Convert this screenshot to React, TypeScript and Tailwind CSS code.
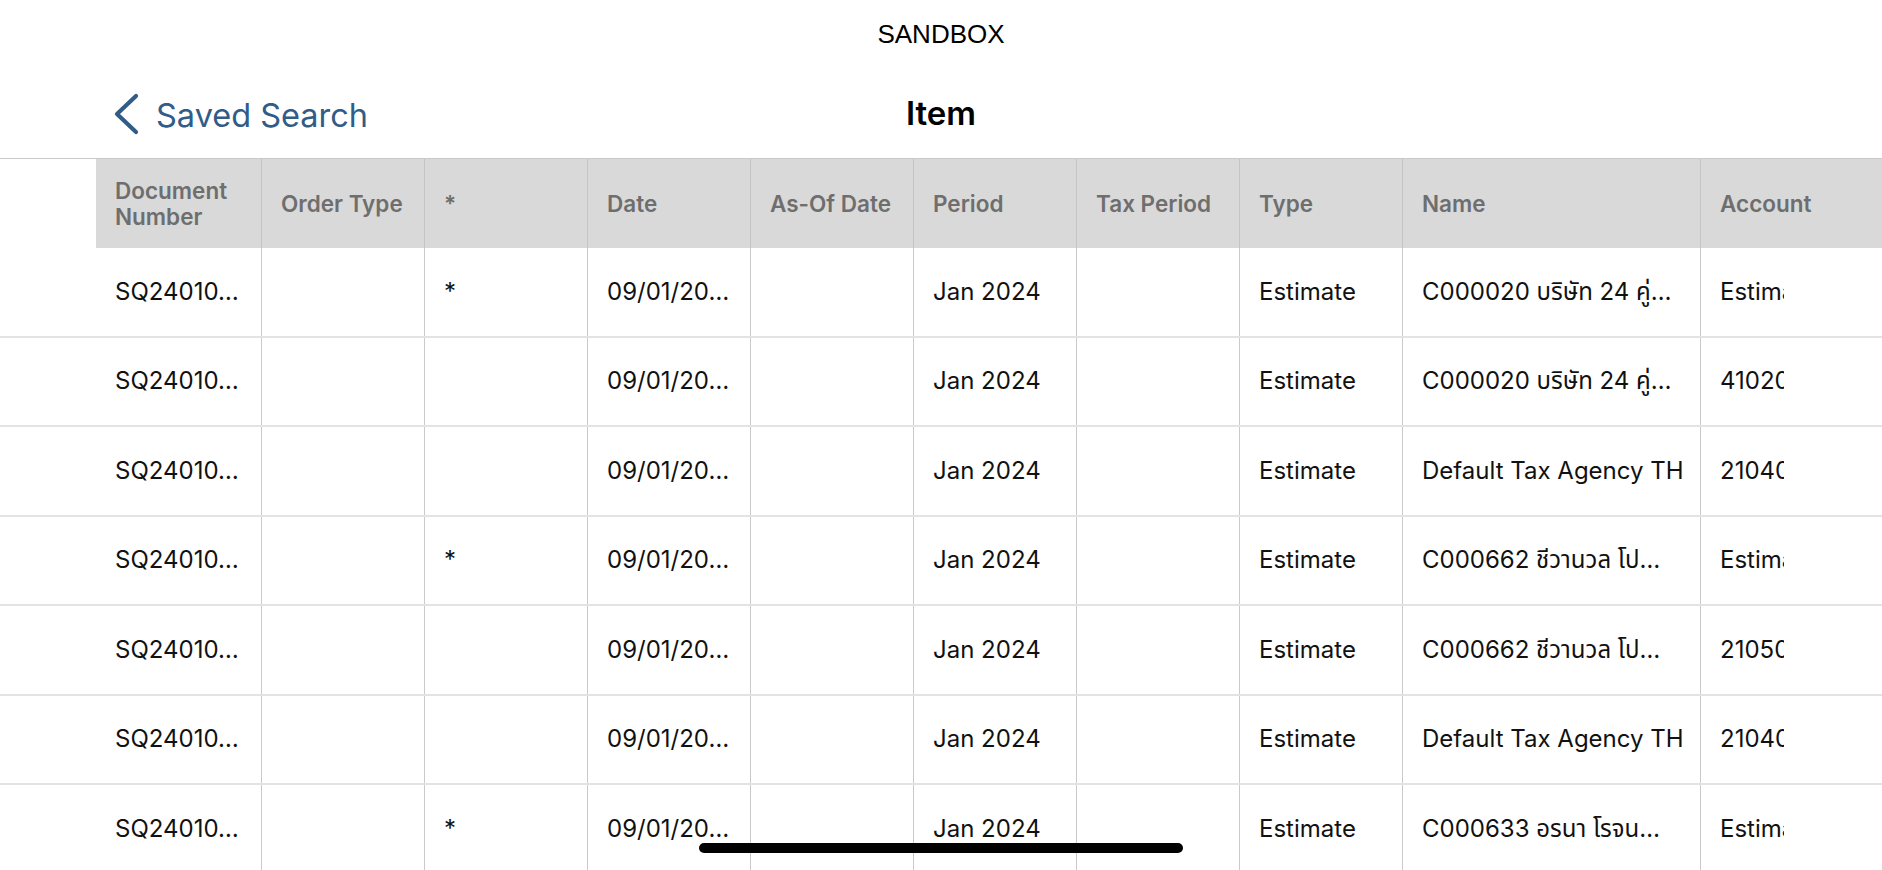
import React from "react";

type Row = {
  doc: string;
  star: string;
  date: string;
  period: string;
  type: string;
  name: string;
  account: string;
};

const rows: Row[] = [
  { doc: "SQ24010…", star: "*", date: "09/01/20…", period: "Jan 2024", type: "Estimate", name: "C000020 บริษัท 24 คู่…", account: "Estimate" },
  { doc: "SQ24010…", star: "", date: "09/01/20…", period: "Jan 2024", type: "Estimate", name: "C000020 บริษัท 24 คู่…", account: "41020" },
  { doc: "SQ24010…", star: "", date: "09/01/20…", period: "Jan 2024", type: "Estimate", name: "Default Tax Agency TH", account: "21040" },
  { doc: "SQ24010…", star: "*", date: "09/01/20…", period: "Jan 2024", type: "Estimate", name: "C000662 ชีวานวล โป…", account: "Estimate" },
  { doc: "SQ24010…", star: "", date: "09/01/20…", period: "Jan 2024", type: "Estimate", name: "C000662 ชีวานวล โป…", account: "21050" },
  { doc: "SQ24010…", star: "", date: "09/01/20…", period: "Jan 2024", type: "Estimate", name: "Default Tax Agency TH", account: "21040" },
  { doc: "SQ24010…", star: "*", date: "09/01/20…", period: "Jan 2024", type: "Estimate", name: "C000633 อรนา โรจน…", account: "Estimate" },
];

const headers = [
  "Document Number",
  "Order Type",
  "*",
  "Date",
  "As-Of Date",
  "Period",
  "Tax Period",
  "Type",
  "Name",
];

const widths = [
  "w-[166px]",
  "w-[163px]",
  "w-[163px]",
  "w-[163px]",
  "w-[163px]",
  "w-[163px]",
  "w-[163px]",
  "w-[163px]",
  "w-[298px]",
];

function BodyCell({ w, children }: { w: string; children?: React.ReactNode }) {
  return (
    <div className={`${w} shrink-0 h-full flex items-center pl-[19px] border-r border-[#cacaca] whitespace-nowrap overflow-hidden`}>
      {children}
    </div>
  );
}

export default function App() {
  return (
    <div
      className="relative w-[1882px] h-[870px] overflow-hidden bg-white"
      style={{ fontFamily: 'Inter, "Noto Sans Thai", "Noto Sans", "DejaVu Sans", sans-serif' }}
    >
      {/* Status title */}
      <div
        className="h-[69px] flex items-center justify-center text-[26px] text-black"
        style={{ fontFamily: '"Liberation Sans", Arial, sans-serif' }}
      >
        SANDBOX
      </div>

      {/* Navigation bar */}
      <div className="relative h-[89px] flex items-center">
        <div className="flex items-center pl-[113px] gap-[17px] text-[#315c87]">
          <svg width="26" height="42" viewBox="0 0 26 42" className="shrink-0">
            <polyline
              points="23,3 4,21 23,39"
              fill="none"
              stroke="#315c87"
              strokeWidth="4.2"
              strokeLinecap="round"
              strokeLinejoin="round"
            />
          </svg>
          <span className="text-[32.5px] leading-none mt-[5px]">Saved Search</span>
        </div>
        <div className="absolute inset-0 flex items-center justify-center pointer-events-none">
          <span className="text-[33px] font-semibold text-black leading-none">Item</span>
        </div>
      </div>

      {/* Table */}
      <div className="border-t border-[#c9c9c9]">
        {/* Header */}
        <div className="ml-[96px] h-[89px] flex bg-[#d9d9d9] text-[22.5px] font-semibold text-[#6e6e6e] leading-[26px]">
          {headers.map((h, i) => (
            <div
              key={h}
              className={`${widths[i]} shrink-0 h-full flex items-center pl-[19px] pr-[12px] border-r border-[#c4c4c4]`}
            >
              {h}
            </div>
          ))}
          <div className="flex-1 h-full flex items-center pl-[19px] whitespace-nowrap">Account</div>
        </div>

        {/* Body rows */}
        {rows.map((r, idx) => (
          <div key={idx} className="h-[89.5px] border-b-2 border-[#e3e3e3] flex text-[24px] text-[#111111]">
            <div className="w-[96px] shrink-0" />
            <BodyCell w={widths[0]}>{r.doc}</BodyCell>
            <BodyCell w={widths[1]} />
            <BodyCell w={widths[2]}>{r.star}</BodyCell>
            <BodyCell w={widths[3]}>{r.date}</BodyCell>
            <BodyCell w={widths[4]} />
            <BodyCell w={widths[5]}>{r.period}</BodyCell>
            <BodyCell w={widths[6]} />
            <BodyCell w={widths[7]}>{r.type}</BodyCell>
            <BodyCell w={widths[8]}>{r.name}</BodyCell>
            <div className="flex-1 h-full flex items-center pl-[19px]">
              <div className="w-[64px] overflow-hidden whitespace-nowrap">{r.account}</div>
            </div>
          </div>
        ))}
      </div>

      {/* Home indicator */}
      <div className="absolute left-[699px] top-[843px] w-[484px] h-[10px] rounded-full bg-black" />
    </div>
  );
}
